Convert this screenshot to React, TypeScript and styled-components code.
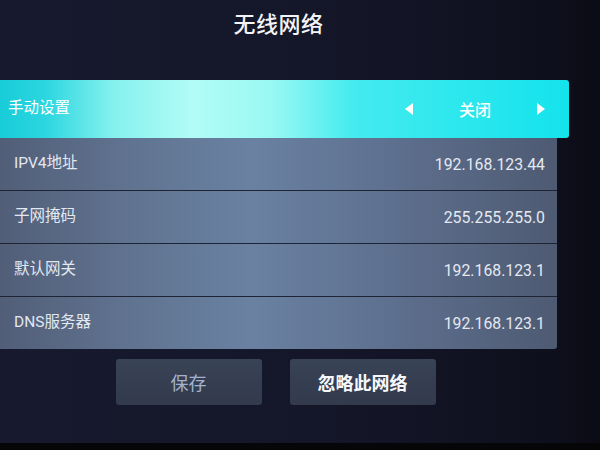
import React from "react";
import styled, { createGlobalStyle } from "styled-components";

const Global = createGlobalStyle`
  html, body { margin: 0; padding: 0; }
  body {
    width: 600px; height: 450px; overflow: hidden;
    background: #060609;
    font-family: Roboto, "Noto Sans CJK SC", sans-serif;
  }
`;

const Screen = styled.div`
  width: 600px;
  height: 443px;
  background: linear-gradient(90deg, #171a2e 0%, #141628 60%, #0e0f1c 93%, #0b0b15 100%);
  display: flex;
  flex-direction: column;
`;

const Column = styled.div`
  width: 557px;
  display: flex;
  flex-direction: column;
`;

const Title = styled.div`
  height: 80px;
  box-sizing: border-box;
  padding-top: 6px;
  text-align: center;
  color: #f4f4f8;
  font-size: 22px;
  font-weight: 500;
  font-family: "Noto Sans CJK SC", sans-serif;
  letter-spacing: 0.5px;
`;

const Highlight = styled.div`
  height: 58px;
  margin-right: -12px;
  border-radius: 0 3px 3px 0;
  background: linear-gradient(90deg, #18ccd8 0%, #2cd6e0 8%, #86f1ee 20%, #b2fcf6 34%, #98f8f3 48%, #44ebef 62%, #14e3ec 100%);
  display: flex;
  align-items: center;
  padding: 0 24px 0 8px;
  color: #ffffff;
  font-size: 16px;
  font-family: "Noto Sans CJK SC", sans-serif;
`;

const Label = styled.span`
  flex: 1;
  font-size: 15.5px;
  padding-bottom: 7px;
`;

const Selector = styled.div`
  display: flex;
  align-items: center;
  width: 140px;
  justify-content: space-between;
`;

const Arrow = styled.span<{ $dir: "left" | "right" }>`
  width: 0;
  height: 0;
  border-top: 6px solid transparent;
  border-bottom: 6px solid transparent;
  ${(p) => (p.$dir === "left" ? "border-right: 8px solid #fff;" : "border-left: 8px solid #fff;")}
`;

const SelValue = styled.span`
  font-size: 16px;
  font-weight: 500;
`;

const Panel = styled.div`
  background: linear-gradient(90deg, #525e78 0%, #617592 25%, #6a81a2 45%, #5e708f 70%, #4e5a72 100%);
  display: flex;
  flex-direction: column;
  border-radius: 0 0 3px 0;
`;

const Row = styled.div<{ $last?: boolean }>`
  height: 52px;
  display: flex;
  align-items: center;
  justify-content: space-between;
  padding: 0 12px 0 14px;
  color: #e2e8f0;
  border-bottom: ${(p) => (p.$last ? "none" : "1.5px solid #1e2434")};
`;

const RowLabel = styled.span`
  font-size: 15.5px;
  padding-bottom: 6px;
`;

const RowValue = styled.span`
  font-size: 15.8px;
  color: #e4e9f2;
`;

const Buttons = styled.div`
  display: flex;
  justify-content: center;
  gap: 28px;
  padding-top: 10px;
  padding-right: 6px;
`;

const Button = styled.div<{ $active?: boolean }>`
  width: 146px;
  height: 46px;
  border-radius: 3px;
  background: linear-gradient(180deg, #394356 0%, #323a4c 100%);
  display: flex;
  align-items: center;
  justify-content: center;
  font-family: "Noto Sans CJK SC", sans-serif;
  font-size: 18px;
  color: ${(p) => (p.$active ? "#f6f7fa" : "#a2b3d0")};
  font-weight: ${(p) => (p.$active ? 700 : 400)};
`;

const rows = [
  ["IPV4地址", "192.168.123.44"],
  ["子网掩码", "255.255.255.0"],
  ["默认网关", "192.168.123.1"],
  ["DNS服务器", "192.168.123.1"],
];

export default function App() {
  return (
    <>
      <Global />
      <Screen>
        <Column>
          <Title>无线网络</Title>
          <Highlight>
            <Label>手动设置</Label>
            <Selector>
              <Arrow $dir="left" />
              <SelValue>关闭</SelValue>
              <Arrow $dir="right" />
            </Selector>
          </Highlight>
          <Panel>
            {rows.map(([k, v], i) => (
              <Row key={k} $last={i === rows.length - 1}>
                <RowLabel>{k}</RowLabel>
                <RowValue>{v}</RowValue>
              </Row>
            ))}
          </Panel>
          <Buttons>
            <Button>保存</Button>
            <Button $active>忽略此网络</Button>
          </Buttons>
        </Column>
      </Screen>
    </>
  );
}
